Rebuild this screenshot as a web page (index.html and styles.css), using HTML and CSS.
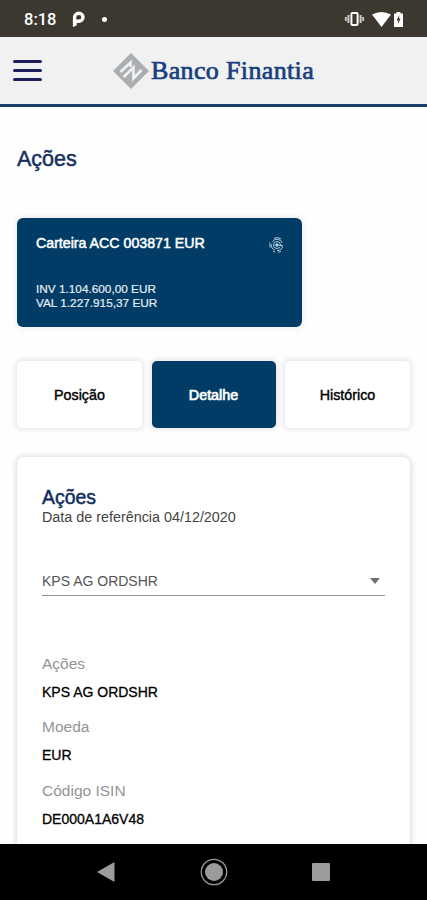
FILE: index.html
```html
<!DOCTYPE html>
<html lang="pt">
<head>
    <meta charset="UTF-8">
    <meta name="viewport" content="width=device-width, initial-scale=1.0">
    <title>Banco Finantia</title>
    <link rel="stylesheet" href="styles.css">
</head>
<body>
    <div class="status-bar">
        <span class="clock">8:18</span>
        <svg class="app-icon" width="14" height="18" viewBox="0 0 14 18">
            <path d="M2.6 12V7.2A4.2 4 0 1 1 6.8 11.2H4" fill="none" stroke="#fff" stroke-width="3.4"/>
            <path d="M.9 10h3.8v5.5L.9 17z" fill="#fff"/>
        </svg>
        <span class="dot"></span>
        <svg class="status-icons" width="62" height="18" viewBox="0 0 62 18">
            <rect x="7.4" y="3" width="6.2" height="12" rx="1" fill="none" stroke="#fff" stroke-width="2"/>
            <path d="M4.4 5v8M16.6 5v8" stroke="#ccc" stroke-width="2"/>
            <path d="M1.8 7v4M19.2 7v4" stroke="#ccc" stroke-width="1.8"/>
            <path d="M28 4.6Q37.5 -.5 47 4.6L37.5 17z" fill="#fff"/>
            <path d="M50 3.5h2.5V2h4v1.5H59V17h-9z" fill="#fff"/>
            <path d="M55.2 5l-2.6 5.5h1.6V14l2.3-5.5H55z" fill="#3d382f"/>
        </svg>
    </div>

    <header class="header">
        <div class="menu">
            <span></span>
            <span></span>
            <span></span>
        </div>
        <div class="brand">
            <svg width="36" height="36" viewBox="0 0 36 36">
                <path d="M18 0L36 18 18 36 0 18z" fill="#abaeb0"/>
                <path d="M7.5 19L17.5 9.5V14M10.5 24L20.5 14.5V25.5L28.5 17" fill="none" stroke="#f1f1f1" stroke-width="2.6"/>
            </svg>
            <span class="brand-name">Banco Finantia</span>
        </div>
    </header>

    <main class="content">
        <h1 class="page-title">Ações</h1>

        <section class="wallet">
            <div class="wallet-top">
                <span class="wallet-name">Carteira ACC 003871 EUR</span>
                <svg width="16" height="16" viewBox="0 0 16 16" fill="none" stroke="#b8cadb" stroke-width="1">
                    <circle cx="8" cy="8" r="1.3" fill="#b8cadb"/>
                    <path d="M11.5 8A3.5 3.5 0 1 0 8 11.5L11 10.5"/>
                    <path d="M13.3 5.8A5.6 5.6 0 0 0 3.3 5M2.4 7.5A5.6 5.6 0 0 0 6 13.2M8 13.6A5.6 5.6 0 0 0 13.5 8.5H10"/>
                    <path d="M5 1.3A7.3 7.3 0 0 1 12.2 2M1 5.5V10.5M4 14.2l2 .9M9 15.3l3-1"/>
                </svg>
            </div>
            <div class="wallet-values">
                <div>INV 1.104.600,00 EUR</div>
                <div>VAL 1.227.915,37 EUR</div>
            </div>
        </section>

        <nav class="tabs">
            <div class="tab">Posição</div>
            <div class="tab active">Detalhe</div>
            <div class="tab">Histórico</div>
        </nav>

        <section class="details">
            <h2 class="details-title">Ações</h2>
            <div class="details-date">Data de referência 04/12/2020</div>

            <div class="select">
                <span>KPS AG ORDSHR</span>
                <span class="caret"></span>
            </div>

            <dl class="fields">
                <dt>Ações</dt>
                <dd>KPS AG ORDSHR</dd>
                <dt>Moeda</dt>
                <dd>EUR</dd>
                <dt>Código ISIN</dt>
                <dd>DE000A1A6V48</dd>
            </dl>
        </section>
    </main>

    <footer class="nav-bar">
        <svg width="18" height="20" viewBox="0 0 18 20"><path d="M0 10L17.5 0v20z" fill="#9b9b9b"/></svg>
        <svg width="28" height="28" viewBox="0 0 28 28">
            <circle cx="14" cy="14" r="12.7" fill="none" stroke="#9b9b9b" stroke-width="1.3"/>
            <circle cx="14" cy="14" r="9" fill="#9b9b9b"/>
        </svg>
        <svg width="18" height="18" viewBox="0 0 18 18"><rect width="18" height="18" rx="1" fill="#9b9b9b"/></svg>
    </footer>
</body>
</html>
```
FILE: styles.css
```css
* {
    box-sizing: border-box;
}

body {
    margin: 0;
    height: 900px;
    display: flex;
    flex-direction: column;
    overflow: hidden;
    background: #fefefe;
    color: #000;
    font-family: "Liberation Sans", Arial, sans-serif;
    font-size: 14px;
}

.status-bar {
    flex: none;
    display: flex;
    align-items: center;
    height: 37px;
    padding: 1px 21px 0 24px;
    background: #3d382f;
    color: #fff;
}

.clock {
    width: 48px;
    font-family: Roboto, sans-serif;
    font-size: 16.5px;
    font-weight: 500;
}

.dot {
    width: 5px;
    height: 5px;
    margin-left: 16px;
    border-radius: 50%;
    background: #fff;
}

.status-icons {
    margin-left: auto;
}

/* Header */
.header {
    flex: none;
    display: flex;
    align-items: center;
    height: 70px;
    padding: 0 13px;
    background: #f1f1f1;
    border-bottom: 3px solid #1b3e6b;
}

.menu {
    display: flex;
    flex-direction: column;
    gap: 6.5px;
    width: 100px;
}

.menu span {
    width: 29px;
    height: 2.5px;
    border-radius: 2px;
    background: #1c1f5c;
}

.brand {
    display: flex;
    align-items: center;
    gap: 2px;
}

.brand-name {
    color: #173f7d;
    font-family: "Liberation Serif", "Times New Roman", serif;
    font-size: 26px;
    letter-spacing: 0.35px;
    white-space: nowrap;
    -webkit-text-stroke: 0.7px #173f7d;
}

/* Content */
.content {
    flex: 1;
    min-height: 0;
    padding: 39px 17px 0;
    overflow: hidden;
}

.page-title {
    margin: 0;
    color: #17305f;
    font-size: 21.5px;
    font-weight: normal;
    line-height: 26px;
    -webkit-text-stroke: 0.5px #17305f;
}

.wallet {
    width: 285px;
    height: 109px;
    margin-top: 46px;
    padding: 17px 17px 0 19px;
    border-radius: 6px;
    background: #003c66;
    box-shadow: 0 0 5px 2px rgba(0, 0, 0, 0.06);
    color: #fff;
}

.wallet-top {
    display: flex;
    justify-content: space-between;
    height: 47px;
}

.wallet-top svg {
    margin-top: 2px;
}

.wallet-name {
    font-size: 14.2px;
    line-height: 17px;
    -webkit-text-stroke: 0.5px #fff;
}

.wallet-values {
    color: #e6edf3;
    font-size: 11.8px;
    line-height: 14px;
    -webkit-text-stroke: 0.2px #e6edf3;
}

.tabs {
    display: grid;
    grid-template-columns: 125px 124px 125px;
    justify-content: space-between;
    margin-top: 34px;
}

.tab {
    height: 67px;
    border-radius: 5px;
    background: #fff;
    box-shadow: 0 0 5px 2px rgba(0, 0, 0, 0.09);
    font-size: 14.3px;
    line-height: 68px;
    text-align: center;
    -webkit-text-stroke: 0.4px;
}

.tab.active {
    background: #003c66;
    color: #fff;
    -webkit-text-stroke: 0.7px;
}

.details {
    height: 450px;
    margin-top: 29px;
    padding: 29px 25px 0;
    border-radius: 7px;
    background: #fff;
    box-shadow: 0 0 5px 2px rgba(0, 0, 0, 0.11);
}

.details-title {
    margin: 0;
    color: #102d60;
    font-size: 19.4px;
    font-weight: normal;
    line-height: 22px;
    -webkit-text-stroke: 0.5px #102d60;
}

.details-date {
    color: #444;
    font-size: 14.35px;
    line-height: 18px;
}

.select {
    display: flex;
    justify-content: space-between;
    align-items: center;
    height: 29px;
    margin-top: 41px;
    padding-right: 5px;
    border-bottom: 1px solid #949494;
    color: #555;
}

.caret {
    border: 5.5px solid transparent;
    border-top: 6px solid #707070;
    border-bottom: 0;
}

.fields {
    margin: 56px 0 0;
}

.fields dt {
    color: #949494;
    font-size: 15.5px;
    line-height: 24px;
}

.fields dd {
    margin: 0 0 7.4px;
    line-height: 32px;
    -webkit-text-stroke: 0.3px;
}

/* Android buttons */
.nav-bar {
    flex: none;
    display: flex;
    align-items: center;
    justify-content: space-between;
    height: 56px;
    padding: 0 97px;
    background: #000;
}
```
